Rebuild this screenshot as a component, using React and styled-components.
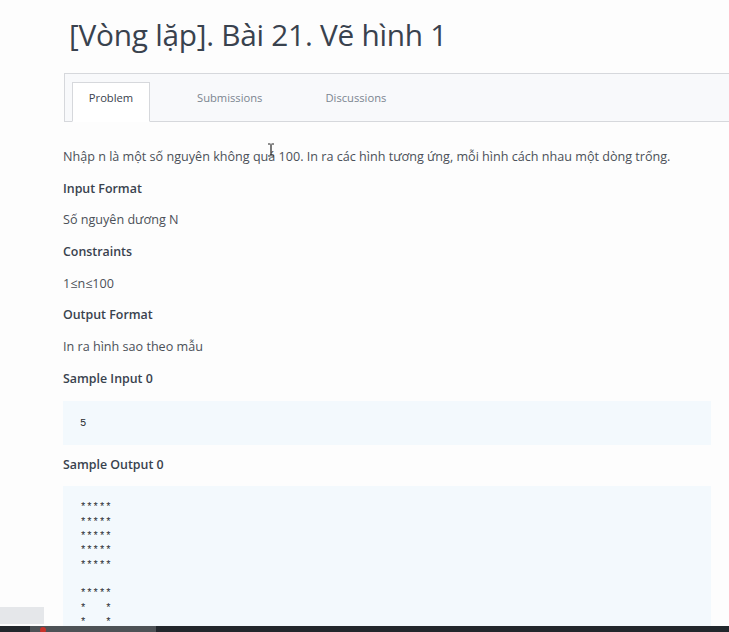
import React from 'react';
import styled, { createGlobalStyle } from 'styled-components';

const Global = createGlobalStyle`
  html, body {
    margin: 0;
    padding: 0;
    background: #fdfdfd;
    overflow: hidden;
  }
  body {
    font-family: "Open Sans", "Noto Sans", sans-serif;
    color: #4a4f57;
  }
`;

const tabs = [
  { label: 'Problem', gap: 0 },
  { label: 'Submissions', gap: 46 },
  { label: 'Discussions', gap: 61 },
];

const square = ['*****', '*****', '*****', '*****', '*****', '', '*****', '*   *', '*   *'];

export default function App() {
  return (
    <Page>
      <Global />
      <Title>[Vòng lặp]. Bài 21. Vẽ hình 1</Title>
      <TabBar>
        {tabs.map((t, i) => (
          <Tab key={t.label} active={i === 0} gap={t.gap}>
            {t.label}
          </Tab>
        ))}
      </TabBar>
      <Body>
        <Para>
          Nhập n là một số nguyên không quá 100. In ra các hình tương ứng, mỗi hình cách nhau một dòng trống.
        </Para>
        <Heading>Input Format</Heading>
        <Para>Số nguyên dương N</Para>
        <Heading>Constraints</Heading>
        <Para>1≤n≤100</Para>
        <Heading>Output Format</Heading>
        <Para>In ra hình sao theo mẫu</Para>
        <Heading>Sample Input 0</Heading>
        <CodeBox>
          <Code>5</Code>
        </CodeBox>
        <Heading>Sample Output 0</Heading>
        <CodeBox tall>
          <Code>{square.join('\n')}</Code>
        </CodeBox>
      </Body>
      <Cursor width="8" height="14" viewBox="0 0 8 14">
        <path d="M1 1h2.5M4.5 1H7M4 1.5v11M1 13h2.5M4.5 13H7" stroke="#222" strokeWidth="1.2" fill="none" />
      </Cursor>
      <HoverTip />
      <PlayerBar>
        <Loaded />
        <Dot />
      </PlayerBar>
    </Page>
  );
}

const Page = styled.div`
  position: relative;
  width: 729px;
  height: 632px;
  overflow: hidden;
`;

const Title = styled.h1`
  margin: 0;
  padding: 15px 0 0 69px;
  font-size: 29.8px;
  font-weight: 400;
  line-height: 40px;
  color: #39424e;
  letter-spacing: -0.25px;
`;

const TabBar = styled.div`
  margin: 18px 0 0 64px;
  height: 49px;
  box-sizing: border-box;
  background: #f8f9fb;
  border: 1px solid #d6d8dc;
  border-right: none;
  display: flex;
  align-items: flex-end;
  padding-left: 7px;
`;

const Tab = styled.div`
  height: 40px;
  box-sizing: border-box;
  margin-bottom: -1px;
  margin-left: ${(p) => p.gap}px;
  width: ${(p) => (p.active ? '78px' : 'auto')};
  padding-bottom: 10px;
  display: flex;
  align-items: center;
  justify-content: center;
  font-size: 11.2px;
  color: ${(p) => (p.active ? '#39424e' : '#7b8590')};
  background: ${(p) => (p.active ? '#ffffff' : 'transparent')};
  border: 1px solid ${(p) => (p.active ? '#d6d8dc' : 'transparent')};
  border-bottom: 1px solid ${(p) => (p.active ? '#ffffff' : 'transparent')};
`;

const Body = styled.div`
  padding: 25px 18px 0 63px;
`;

const Para = styled.p`
  margin: 0 0 12.7px;
  font-size: 12.6px;
  line-height: 19px;
  color: #4b5058;
`;

const Heading = styled.h4`
  margin: 0 0 12.7px;
  font-size: 12.4px;
  line-height: 19px;
  font-weight: 600;
  color: #39424e;
`;

const CodeBox = styled.div`
  background: #f3f9fd;
  padding: ${(p) => (p.tall ? '14px 17px' : '15px 17px')};
  margin: 6px 0 ${(p) => (p.tall ? '0' : '10px')};
  min-height: ${(p) => (p.tall ? '200px' : '0')};
`;

const Code = styled.pre`
  margin: 0;
  font-family: "Liberation Mono", "DejaVu Sans Mono", monospace;
  font-size: 10.5px;
  line-height: 14.3px;
  color: #2a2d31;
`;

const Cursor = styled.svg`
  position: absolute;
  left: 267px;
  top: 143px;
`;

const HoverTip = styled.div`
  position: absolute;
  left: 0;
  top: 607px;
  width: 44px;
  height: 17px;
  background: rgba(210, 214, 218, 0.55);
`;

const PlayerBar = styled.div`
  position: absolute;
  left: 0;
  bottom: 0;
  width: 100%;
  height: 6px;
  background: #22272c;
`;

const Loaded = styled.div`
  position: absolute;
  left: 30px;
  top: 0;
  width: 126px;
  height: 100%;
  background: #4d5256;
`;

const Dot = styled.div`
  position: absolute;
  left: 40px;
  top: 1px;
  width: 6px;
  height: 6px;
  border-radius: 50%;
  background: #c8322a;
`;
